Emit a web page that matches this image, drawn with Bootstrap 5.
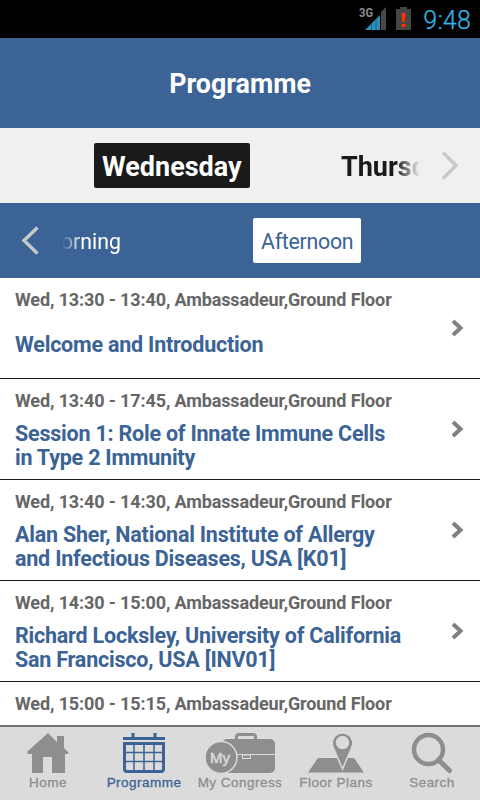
<!DOCTYPE html>
<html lang="en">
<head>
<meta charset="utf-8">
<meta name="viewport" content="width=device-width, initial-scale=1">
<title>Programme</title>
<link href="https://cdn.jsdelivr.net/npm/bootstrap@5.3.0/dist/css/bootstrap.min.css" rel="stylesheet">
<style>
body{font-family:Roboto,"Noto Sans",sans-serif;width:480px;height:800px;--blue:#3b6395}
.statusbar{height:38px;color:#33b5e5;font-size:25px;padding-right:9px}
.clock{line-height:41px;font-weight:300;-webkit-text-stroke:.25px currentColor;letter-spacing:.2px}
.titlebar{height:90px;background:var(--blue)}
.titlebar h1{font-size:26.8px;line-height:30px;padding-top:1px}
.days{height:75px;background:#f0f0f0;color:#1a1a1a;font-size:27px;line-height:48px}
.parts{height:75px;background:var(--blue);font-size:21.3px;line-height:48px}
.chip{height:45px;padding:0 8px;border-radius:2px;white-space:nowrap}
.day-on{background:#1a1a1a;width:156px;margin-left:94px}
.day-next{width:78px;height:45px;margin-left:91px;overflow:hidden;white-space:nowrap;-webkit-mask-image:linear-gradient(90deg,#000 55px,transparent 79px);mask-image:linear-gradient(90deg,#000 55px,transparent 79px)}
.part-prev{width:59px;height:45px;margin-left:22px;overflow:hidden;white-space:nowrap;direction:rtl;-webkit-mask-image:linear-gradient(90deg,transparent,#000 20px);mask-image:linear-gradient(90deg,transparent,#000 20px)}
.part-on{background:#fff;color:var(--blue);width:108px;margin-left:132px;letter-spacing:-.25px}
.sessions{height:447px}
.session{height:101px;border-bottom:1px solid #1c1c1c;padding:9px 0 0 15px}
.slot{font-size:18px;line-height:26px;letter-spacing:-.12px;color:#666;white-space:nowrap}
.name{font-size:21.5px;letter-spacing:-.22px;line-height:24px;height:48px;margin-top:8px;color:var(--blue);white-space:nowrap}
.go{margin:32px 14px 0 0}
.tabs{height:75px;background:#dbdbdb;border-top:2px solid #737373;color:#8e8e8e;font-family:"Liberation Sans",Arial,sans-serif;font-size:13.5px;letter-spacing:.47px}
.tabs a{width:96px;color:inherit}
.tabs a.active{color:var(--blue)}
.tabs svg{margin-top:4px}
.tabs span{line-height:18px;margin-top:-1px;-webkit-text-stroke:.3px currentColor;white-space:nowrap}
</style>
</head>
<body class="d-flex flex-column overflow-hidden bg-white">
<div class="statusbar bg-black d-flex justify-content-end flex-shrink-0">
  <svg width="56" height="38" viewBox="0 0 56 38" class="me-2">
    <text x="0" y="17" font-family="Roboto" font-size="12.5" font-weight="700" fill="#8b8b8b" textLength="14" lengthAdjust="spacingAndGlyphs">3G</text>
    <path d="M6 30 21 15V30Z" fill="#2b91bd"/><path d="M12.5 24v6M17 19v11" stroke="#17607f"/><path d="M22 12 27 7V30H22Z" fill="#484848"/>
    <path d="M37 9h4V7h7v2h4v21H37Z" fill="#454545"/><path d="M42.500 13h4l-.7 9h-2.6ZM42.500 24h4v3h-4Z" fill="#ff3300"/>
  </svg>
  <span class="clock">9:48</span>
</div>
<header class="titlebar d-flex align-items-center justify-content-center text-white flex-shrink-0"><h1 class="m-0 fw-bold">Programme</h1></header>
<div class="days d-flex align-items-center fw-bold flex-shrink-0">
  <div class="chip day-on text-white">Wednesday</div>
  <div class="day-next">Thursday</div>
  <svg class="ms-auto me-3" width="30" height="36" viewBox="0 0 30 36" fill="none" stroke="#c8c8c8" stroke-width="3.4"><path d="M9 4.500 22 17.500 9 30.500"/></svg>
</div>
<nav class="parts d-flex align-items-center text-white flex-shrink-0">
  <svg width="40" height="36" viewBox="0 0 40 36" fill="none" stroke="#c8c8c8" stroke-width="3.4"><path d="M37.500 4.500 24 17.500 37.500 30.500"/></svg>
  <div class="part-prev">Morning</div>
  <div class="chip part-on">Afternoon</div>
</nav>
<main class="sessions overflow-hidden flex-shrink-0">
  <div class="session d-flex justify-content-between fw-bold"><div><div class="slot">Wed, 13:30 - 13:40, Ambassadeur,Ground Floor</div><div class="name d-flex align-items-center">Welcome and Introduction</div></div><svg class="go" width="16" height="20" viewBox="0 0 16 20" fill="none" stroke="#808080" stroke-width="4"><path d="M3 2 10.500 9 3 16"/></svg></div>
  <div class="session d-flex justify-content-between fw-bold"><div><div class="slot">Wed, 13:40 - 17:45, Ambassadeur,Ground Floor</div><div class="name">Session 1: Role of Innate Immune Cells<br>in Type 2 Immunity</div></div><svg class="go" width="16" height="20" viewBox="0 0 16 20" fill="none" stroke="#808080" stroke-width="4"><path d="M3 2 10.500 9 3 16"/></svg></div>
  <div class="session d-flex justify-content-between fw-bold"><div><div class="slot">Wed, 13:40 - 14:30, Ambassadeur,Ground Floor</div><div class="name">Alan Sher, National Institute of Allergy<br>and Infectious Diseases, USA [K01]</div></div><svg class="go" width="16" height="20" viewBox="0 0 16 20" fill="none" stroke="#808080" stroke-width="4"><path d="M3 2 10.500 9 3 16"/></svg></div>
  <div class="session d-flex justify-content-between fw-bold"><div><div class="slot">Wed, 14:30 - 15:00, Ambassadeur,Ground Floor</div><div class="name">Richard Locksley, University of California<br>San Francisco, USA [INV01]</div></div><svg class="go" width="16" height="20" viewBox="0 0 16 20" fill="none" stroke="#808080" stroke-width="4"><path d="M3 2 10.500 9 3 16"/></svg></div>
  <div class="session fw-bold"><div class="slot">Wed, 15:00 - 15:15, Ambassadeur,Ground Floor</div></div>
</main>
<nav class="tabs d-flex flex-shrink-0">
  <a class="d-flex flex-column align-items-center text-decoration-none" href="#"><svg width="96" height="44" viewBox="0 731 96 44"><path fill="#8e8e8e" d="M48 733 57 742V736H64V748L69 753 67 754H65V773H52V757H43V773H32V754H28L27 752Z"/></svg><span>Home</span></a>
  <a class="active d-flex flex-column align-items-center text-decoration-none" href="#"><svg width="96" height="44" viewBox="96 731 96 44" fill="none" stroke="#3b6395"><path stroke-width="3" d="M123 738.5H165M133 733V739M155 733V739"/><path stroke-width="3" d="M124.5 743.5H163.5V769Q163.5 771.5 161 771.5H127Q124.5 771.5 124.5 769Z"/><path stroke-width="1.5" d="M134 743V771M144 743V771M154 743V771M125 752.5H163M125 761.5H163"/></svg><span>Programme</span></a>
  <a class="d-flex flex-column align-items-center text-decoration-none" href="#"><svg width="96" height="44" viewBox="192 731 96 44"><path fill="none" stroke="#8e8e8e" stroke-width="3" d="M236.500 740V737Q236.500 734.500 239 734.500H253Q255.500 734.500 255.500 737V740"/><rect x="222" y="739" width="53" height="34" rx="5" fill="#8e8e8e"/><path d="M233 754.500H275" stroke="#dbdbdb" stroke-width="1.200"/><rect x="242.500" y="755" width="8" height="3.500" fill="#8e8e8e" stroke="#dbdbdb"/><circle cx="221" cy="757.500" r="16" fill="#8e8e8e" stroke="#dbdbdb" stroke-width="1.500"/><text x="210" y="763" font-family="Liberation Sans" font-size="15" letter-spacing="0" fill="#dbdbdb" stroke="#dbdbdb" stroke-width=".5">My</text></svg><span>My Congress</span></a>
  <a class="d-flex flex-column align-items-center text-decoration-none" href="#"><svg width="96" height="44" viewBox="288 731 96 44"><path fill="#8e8e8e" d="M318 758H354L364 772.500H308Z"/><path fill="#8e8e8e" stroke="#dbdbdb" stroke-width="1.500" d="M342.500 769 333.500 748A10.200 10.200 0 1 1 351.500 748Z"/><circle cx="342.500" cy="742.500" r="6.700" fill="#dbdbdb"/></svg><span>Floor Plans</span></a>
  <a class="d-flex flex-column align-items-center text-decoration-none" href="#"><svg width="96" height="44" viewBox="384 731 96 44" fill="none" stroke="#8e8e8e"><circle cx="428.500" cy="749.500" r="14.500" stroke-width="4.500"/><path d="M438.500 760 449.500 770.500" stroke-width="5" stroke-linecap="round"/></svg><span>Search</span></a>
</nav>
</body>
</html>
